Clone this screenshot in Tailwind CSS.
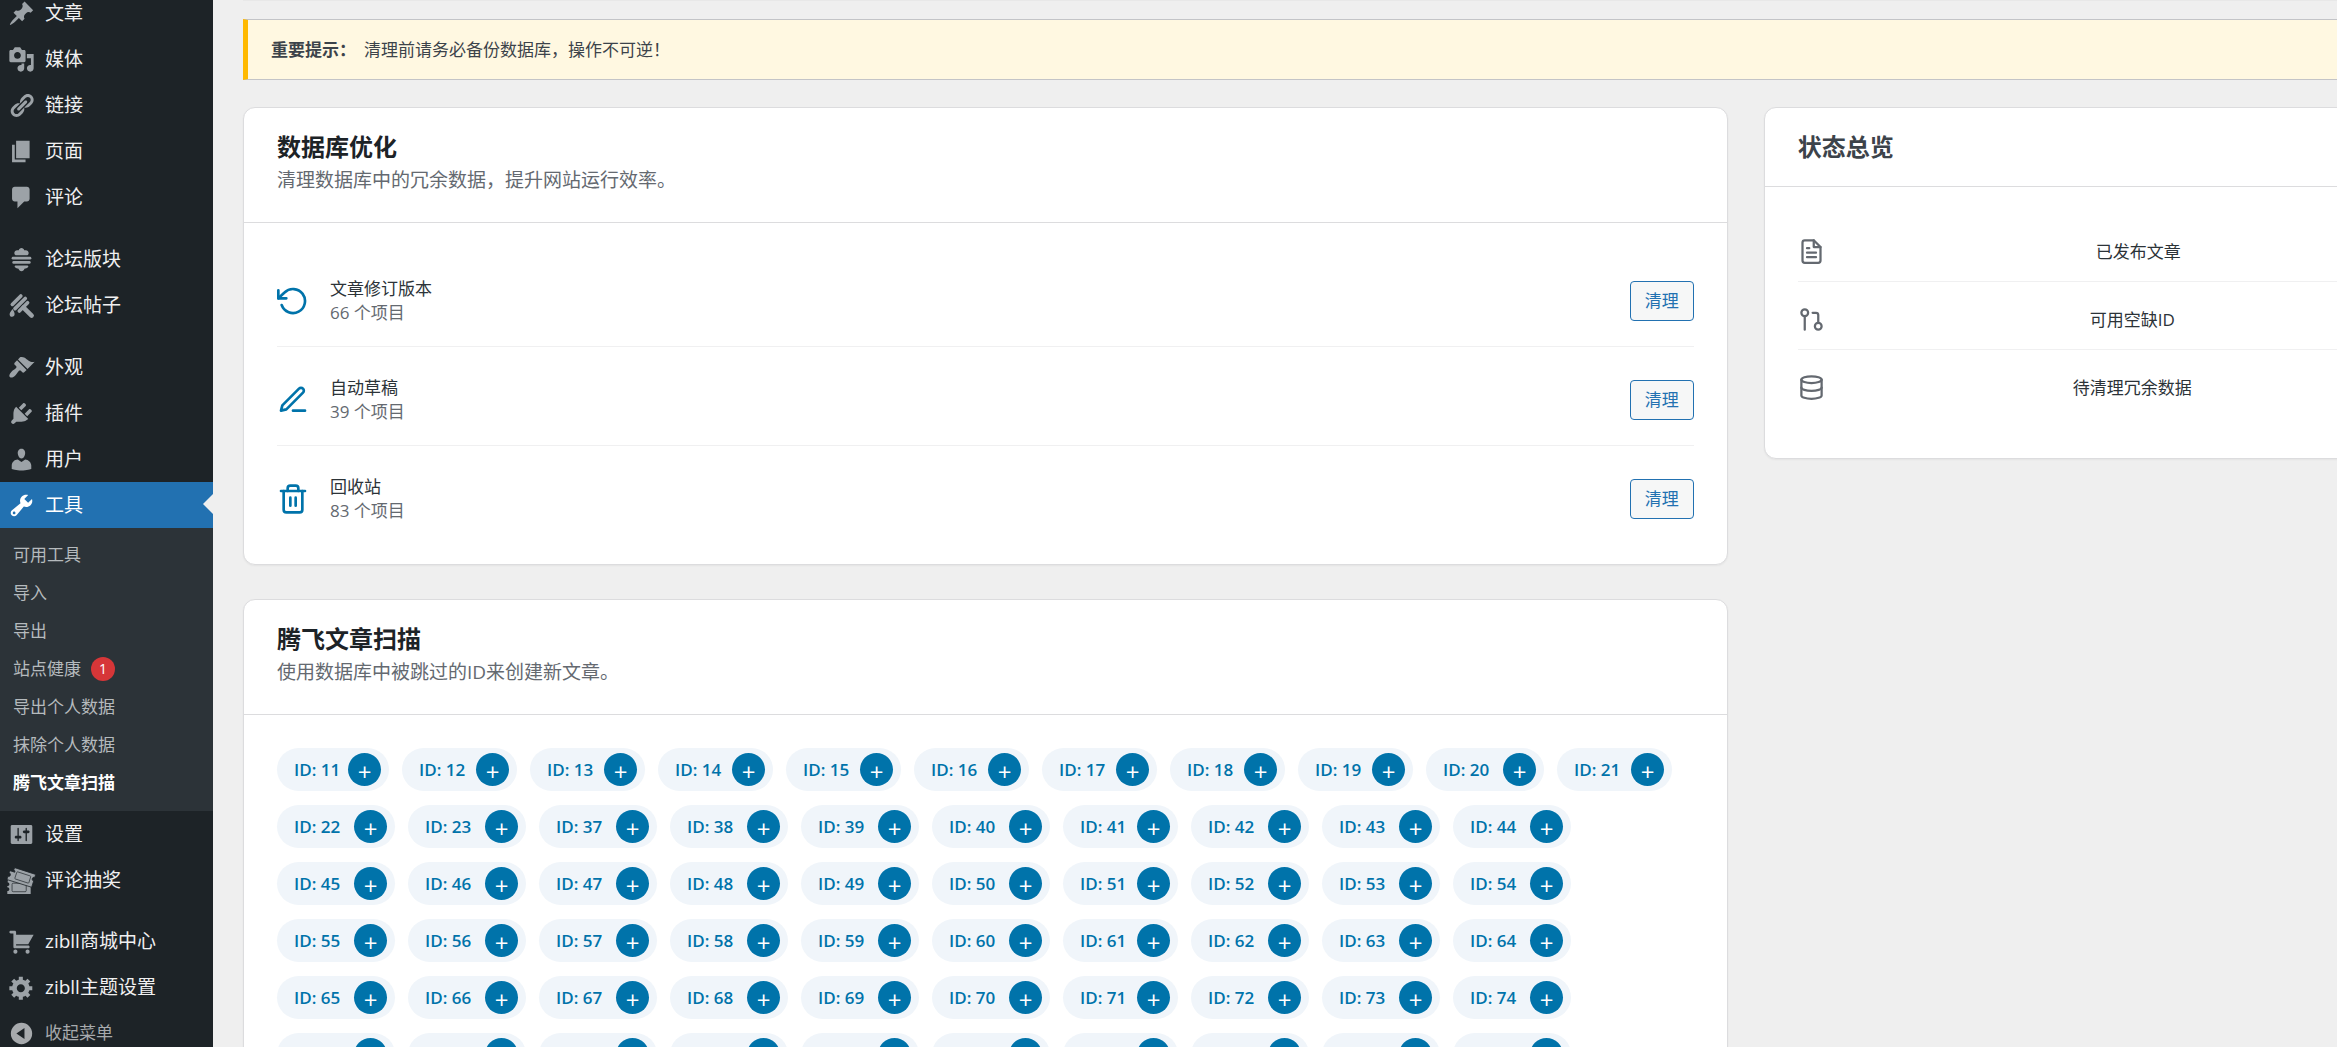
<!DOCTYPE html>
<html lang="zh-CN">
<head>
  <meta charset="UTF-8" />
  <meta name="viewport" content="width=device-width, initial-scale=1.0" />
  <title>腾飞文章扫描</title>
  <script src="https://cdn.jsdelivr.net/npm/@tailwindcss/browser@4"></script>
</head>
<body class="bg-[#efefef] font-['Open_Sans','Noto_Sans_CJK_SC',sans-serif] text-[17px] text-[#3c434a]">
  <div class="flex h-screen overflow-hidden">

    <!-- 后台菜单 -->
    <nav class="w-[213px] shrink-0 bg-[#1d2327] text-[19px] text-[#f0f0f1]">
      <ul class="-mt-2.5">
        <li><a href="#" class="flex h-[46px] items-center gap-2.5 pl-2"><svg class="size-[27px] fill-[#9ca2a7]" viewBox="0 0 20 20"><path d="M10.44 3.02l1.82-1.82 6.36 6.35-1.83 1.82c-1.05-.68-2.48-.57-3.41.36l-.75.75c-.92.93-1.04 2.35-.35 3.41l-1.83 1.82-2.41-2.41-2.8 2.79c-.42.42-3.38 2.71-3.8 2.29s1.86-3.39 2.28-3.81l2.79-2.79L4.1 9.36l1.83-1.82c1.05.69 2.48.57 3.4-.36l.75-.75c.93-.92 1.05-2.35.36-3.41z"/></svg>文章</a></li>
        <li><a href="#" class="flex h-[46px] items-center gap-2.5 pl-2"><svg class="size-[27px] fill-[#9ca2a7]" viewBox="0 0 20 20"><path d="M13 11V4c0-.55-.45-1-1-1h-1.67L9 1H5L3.67 3H2c-.55 0-1 .45-1 1v7c0 .55.45 1 1 1h10c.55 0 1-.45 1-1zM7 4.5c1.38 0 2.5 1.12 2.5 2.5S8.38 9.5 7 9.5 4.5 8.38 4.5 7 5.62 4.5 7 4.5zM14 6h5v10.5c0 1.38-1.12 2.5-2.5 2.5S14 17.88 14 16.5s1.12-2.5 2.5-2.5c.17 0 .34.02.5.05V9h-3V6zm-4 8.05V13h2v3.5c0 1.38-1.12 2.5-2.5 2.5S7 17.88 7 16.5 8.12 14 9.5 14c.17 0 .34.02.5.05z"/></svg>媒体</a></li>
        <li><a href="#" class="flex h-[46px] items-center gap-2.5 pl-2"><svg class="size-[27px] fill-[#9ca2a7]" viewBox="0 0 20 20"><path d="M17.74 2.76c1.68 1.69 1.68 4.41 0 6.1l-1.53 1.52c-1.12 1.12-2.7 1.47-4.14 1.09l2.62-2.61.76-.77.76-.76c.84-.84.84-2.2 0-3.04-.84-.85-2.2-.85-3.04 0l-.77.76-3.38 3.38c-.37-1.44-.02-3.02 1.1-4.14l1.52-1.53c1.69-1.68 4.42-1.68 6.1 0zM8.59 13.43l5.34-5.34c.42-.42.42-1.1 0-1.52-.44-.43-1.13-.39-1.53 0l-5.33 5.34c-.42.42-.42 1.1 0 1.52.44.43 1.13.39 1.52 0zm-.76 2.29l4.14-4.15c.38 1.44.03 3.02-1.09 4.14l-1.52 1.53c-1.69 1.68-4.41 1.68-6.1 0-1.68-1.68-1.68-4.42 0-6.1l1.53-1.52c1.12-1.12 2.7-1.47 4.14-1.1l-4.14 4.15c-.85.84-.85 2.2 0 3.05.84.84 2.2.84 3.04 0z"/></svg>链接</a></li>
        <li><a href="#" class="flex h-[46px] items-center gap-2.5 pl-2"><svg class="size-[27px] fill-[#9ca2a7]" viewBox="0 0 20 20"><path d="M6 15V2h10v13H6zm-1 1h8v2H3V5h2v11z"/></svg>页面</a></li>
        <li class="mb-4"><a href="#" class="flex h-[46px] items-center gap-2.5 pl-2"><svg class="size-[27px] fill-[#9ca2a7]" viewBox="0 0 20 20"><path d="M5 2h9c1.1 0 2 .9 2 2v7c0 1.1-.9 2-2 2h-2l-5 5v-5H5c-1.1 0-2-.9-2-2V4c0-1.1.9-2 2-2z"/></svg>评论</a></li>
        <li><a href="#" class="flex h-[46px] items-center gap-2.5 pl-2"><svg class="size-[27px] fill-[#9ca2a7]" viewBox="0 0 20 20"><path d="M8 3.2C8.2 2.2 9 1.5 10 1.5s1.8.7 2 1.7h1.200c1.2 0 2.1.9 2.1 2s-.6 1.700-1.400 1.700H6.100c-.8 0-1.400-.7-1.400-1.700s.9-2 2.100-2z"/><rect x="2.700" y="8" width="14.600" height="2" rx="1"/><rect x="3.200" y="11.200" width="13.600" height="2" rx="1"/><path d="M5.600 14.400h8.800c.7 0 .9.900.4 1.400-.6.600-1.600.900-2.600 1.100-.3 1-1.200 1.800-2.200 1.800s-1.900-.8-2.200-1.800c-1-.2-2-.5-2.600-1.100-.5-.5-.3-1.400.4-1.400z"/></svg>论坛版块</a></li>
        <li class="mb-4"><a href="#" class="flex h-[46px] items-center gap-2.5 pl-2"><svg class="size-[27px] fill-[#9ca2a7] stroke-[#9ca2a7]" viewBox="0 0 20 20"><path fill="none" stroke-linecap="round" stroke-width="2.700" d="M3.200 9.200l6.300-6.300M5.200 12.300l7.600-7.500M8.400 14.100l6.100-6.100"/><path fill="none" stroke-linecap="round" stroke-width="3.400" d="M11.500 11.500l6 6"/><path stroke="none" d="M3.300 12.500c1 1.600 1.600 2.600 1.600 3.800 0 1.200-.8 2.100-1.900 2.100s-1.800-.9-1.800-2c0-1.300 1.200-2.300 2.100-3.900z"/></svg>论坛帖子</a></li>
        <li><a href="#" class="flex h-[46px] items-center gap-2.5 pl-2"><svg class="size-[27px] fill-[#9ca2a7]" viewBox="0 0 20 20"><path d="M14.480 11.060L7.410 3.990l1.500-1.500c.5-.56 2.300-.47 3.510.32 1.210.8 1.430 1.280 2.910 2.100 1.180.64 2.450 1.260 4.450.85zm-.71.71L6.700 4.700 4.930 6.470c-.39.39-.39 1.020 0 1.410l1.060 1.060c.39.39.39 1.030 0 1.420-.6.6-1.430 1.110-2.210 1.690-.35.26-.7.53-1.010.84C1.430 14.230.4 16.080 1.400 17.070c.99 1 2.840-.03 4.180-1.360.31-.31.58-.66.85-1.020.57-.78 1.080-1.610 1.690-2.210.39-.39 1.020-.39 1.410 0l1.060 1.060c.39.39 1.020.39 1.410 0z"/></svg>外观</a></li>
        <li><a href="#" class="flex h-[46px] items-center gap-2.5 pl-2"><svg class="size-[27px] fill-[#9ca2a7]" viewBox="0 0 20 20"><path d="M13.110 4.360L9.870 7.600 8 5.730l3.240-3.240c.35-.34 1.050-.2 1.560.32.52.51.66 1.210.31 1.550zm-8 1.770l.91-1.120 9.010 9.010-1.190.84c-.71.71-2.630 1.160-3.820 1.160H6.140L4.900 17.260c-.59.59-1.540.59-2.120 0-.59-.58-.59-1.530 0-2.120l1.240-1.240v-3.880c0-1.130.4-3.190 1.090-3.890zm7.260 3.970l3.240-3.240c.34-.35 1.040-.21 1.550.31.52.51.66 1.210.31 1.550l-3.240 3.250z"/></svg>插件</a></li>
        <li><a href="#" class="flex h-[46px] items-center gap-2.5 pl-2"><svg class="size-[27px] fill-[#9ca2a7]" viewBox="0 0 20 20"><path d="M10 9.250c-2.270 0-2.730-3.440-2.730-3.440C7 4.020 7.820 2 9.970 2c2.160 0 2.980 2.020 2.710 3.810 0 0-.41 3.440-2.680 3.440zm0 2.570L12.720 10c2.390 0 4.520 2.330 4.520 4.530v2.490s-3.650 1.130-7.240 1.130c-3.650 0-7.240-1.130-7.240-1.130v-2.490c0-2.250 1.940-4.480 4.470-4.480z"/></svg>用户</a></li>
        <li>
          <a href="#" class="relative flex h-[46px] items-center gap-2.5 bg-[#2271b1] pl-2 text-white"><svg class="size-[27px] fill-white" viewBox="0 0 20 20"><path d="M16.680 9.770c-1.340 1.340-3.300 1.670-4.950.99l-5.410 6.520c-.99.99-2.590.99-3.580 0s-.99-2.590 0-3.570l6.520-5.420c-.68-1.650-.35-3.610.99-4.950 1.280-1.280 3.120-1.620 4.720-1.060l-2.890 2.890 2.820 2.820 2.860-2.870c.53 1.580.18 3.390-1.080 4.650zM3.810 16.210c.4.39 1.040.39 1.430 0 .4-.4.4-1.040 0-1.430-.39-.4-1.030-.4-1.430 0-.39.39-.39 1.030 0 1.430z"/></svg>工具<span class="absolute right-0 top-3 border-y-10 border-r-10 border-y-transparent border-r-[#efefef]"></span></a>
          <ul class="bg-[#2c3338] pt-2 pb-[9px] text-[17px] text-[#b5babd]">
            <li><a href="#" class="flex h-[38px] items-center pl-[13px]">可用工具</a></li>
            <li><a href="#" class="flex h-[38px] items-center pl-[13px]">导入</a></li>
            <li><a href="#" class="flex h-[38px] items-center pl-[13px]">导出</a></li>
            <li><a href="#" class="flex h-[38px] items-center gap-2.5 pl-[13px]">站点健康<span class="flex size-6 items-center justify-center rounded-full bg-[#d63638] text-sm text-white">1</span></a></li>
            <li><a href="#" class="flex h-[38px] items-center pl-[13px]">导出个人数据</a></li>
            <li><a href="#" class="flex h-[38px] items-center pl-[13px]">抹除个人数据</a></li>
            <li><a href="#" class="flex h-[38px] items-center pl-[13px] font-semibold text-white">腾飞文章扫描</a></li>
          </ul>
        </li>
        <li><a href="#" class="flex h-[46px] items-center gap-2.5 pl-2"><svg class="size-[27px] fill-[#9ca2a7]" viewBox="0 0 20 20"><path d="M18 16V4c0-.55-.45-1-1-1H3c-.55 0-1 .45-1 1v12c0 .55.45 1 1 1h14c.55 0 1-.45 1-1zM8 11h1c.55 0 1 .45 1 1s-.45 1-1 1H8v1.500c0 .28-.22.5-.5.5s-.5-.22-.5-.5V13H6c-.55 0-1-.45-1-1s.45-1 1-1h1V5.500c0-.28.22-.5.5-.5s.5.22.5.5V11zm5-2h-1c-.55 0-1-.45-1-1s.45-1 1-1h1V5.500c0-.28.22-.5.5-.5s.5.22.5.5V7h1c.55 0 1 .45 1 1s-.45 1-1 1h-1v5.500c0 .28-.22.5-.5.5s-.5-.22-.5-.5V9z"/></svg>设置</a></li>
        <li class="mb-[15px]"><a href="#" class="flex h-[46px] items-center gap-2.5 pl-2"><svg class="size-[27px] overflow-visible fill-[#9ca2a7] stroke-[#1d2327]" viewBox="0 0 20 20"><path stroke="none" d="M-.5 14c1 .2 1.500-.3 1.500-1.200S.5 11.500-.3 11.300l.3-2h16.800v2c-1 0-1.500.6-1.500 1.400s.6 1.300 1.500 1.300v6H-.5v-2.200c1 0 1.500-.6 1.500-1.400S.5 15-.5 15z"/><rect x="3" y="12" width="10.500" height="6.300" rx=".8" stroke-width=".5"/><path stroke-width=".6" d="M5 .5l15.500 5-.7 2.200c-.9-.2-1.600.1-1.800.9-.3.800.1 1.500 1 1.800l-1.500 4.600L-.8 9.300l.8-2.400c.9.200 1.500 0 1.700-.8.300-.9-.1-1.500-.9-1.800l.7-1.600L5 3.900c.3-.9 0-1.500-.8-1.700z"/><path stroke-width=".5" d="M7.200 3.600l9.200 3c.4.100.5.400.4.700l-1.300 4.200c-.1.400-.4.500-.7.400l-9.300-3c-.4-.1-.5-.4-.4-.7l1.400-4.200c.1-.4.4-.5.7-.4z"/></svg>评论抽奖</a></li>
        <li><a href="#" class="flex h-[46px] items-center gap-2.5 pl-2"><svg class="size-[27px] fill-[#9ca2a7]" viewBox="0 0 20 20"><path d="M6 13h9c.55 0 1 .45 1 1s-.45 1-1 1H5c-.55 0-1-.45-1-1V4H2c-.55 0-1-.45-1-1s.45-1 1-1h3c.55 0 1 .45 1 1v2h13l-4 7H6v1zm-.5 3c.83 0 1.500.67 1.500 1.500S6.330 19 5.500 19 4 18.330 4 17.500 4.670 16 5.500 16zm9 0c.83 0 1.500.67 1.500 1.500s-.67 1.500-1.500 1.500-1.500-.67-1.500-1.500.67-1.500 1.500-1.500z"/></svg>zibll商城中心</a></li>
        <li><a href="#" class="flex h-[46px] items-center gap-2.5 pl-2"><svg class="size-[27px] fill-[#9ca2a7]" viewBox="0 0 20 20"><path d="M18 12h-2.180c-.17.7-.44 1.350-.81 1.930l1.540 1.540-2.100 2.100-1.540-1.540c-.58.36-1.230.63-1.910.79V19H8v-2.180c-.68-.16-1.330-.43-1.910-.79l-1.540 1.540-2.120-2.120 1.540-1.540c-.36-.58-.63-1.230-.79-1.910H1V9.030h2.170c.16-.7.44-1.350.8-1.940L2.430 5.550l2.100-2.100 1.540 1.540c.58-.37 1.240-.64 1.930-.81V2h3v2.180c.68.16 1.330.43 1.910.79l1.540-1.540 2.120 2.120-1.540 1.540c.36.59.64 1.240.8 1.940H18V12zm-8.500 1.500c1.660 0 3-1.340 3-3s-1.340-3-3-3-3 1.340-3 3 1.340 3 3 3z"/></svg>zibll主题设置</a></li>
        <li><button type="button" class="flex h-[46px] items-center gap-2.5 pl-2 text-[17px] text-[#a7aaad]"><svg class="size-[27px] fill-[#a7aaad]" viewBox="0 0 20 20"><path fill-rule="evenodd" d="M10 2.100a7.900 7.900 0 1 1 0 15.800 7.900 7.900 0 0 1 0-15.800zM12.200 6v8L6.200 10z"/></svg>收起菜单</button></li>
      </ul>
    </nav>

    <main class="flex-1 overflow-hidden pl-[30px]">
      <!-- 内容区比窗口宽，右侧被裁切 -->
      <div class="w-[calc(100%+169px)] border-t border-[#e8e8e8]">
        <div class="mt-[18px] mb-[27px] border border-l-[5px] border-[#c3c4c7] border-l-[#ffb900] bg-[#fff8e1] py-4 pl-[23px] leading-[27px]">
          <strong class="mr-2 font-semibold">重要提示：</strong>清理前请务必备份数据库，操作不可逆！
        </div>

        <div class="grid grid-cols-[2fr_1fr] items-start gap-9">
          <div class="space-y-[34px]">
            <section class="rounded-xl border border-[#dcdcde] bg-white shadow-xs">
              <header class="border-b border-[#dcdcde] px-[33px] pt-6 pb-[26px]">
                <h2 class="text-[24px] leading-[30px] font-semibold text-[#1d2327]">数据库优化</h2>
                <p class="mt-0.5 text-[19px] leading-8 text-[#646970]">清理数据库中的冗余数据，提升网站运行效率。</p>
              </header>
              <ul class="px-[33px] pt-[25px] pb-5">
                <li class="flex items-center gap-[21px] border-b border-[#f0f0f1] pt-[29px] pb-[21px]">
                  <svg class="size-8 fill-none stroke-[#0073aa] stroke-2" stroke-linecap="round" stroke-linejoin="round" viewBox="0 0 24 24"><path d="M1 4v6h6"/><path d="M3.510 15a9 9 0 1 0 2.130-9.360L1 10"/></svg>
                  <div class="flex-1 leading-6">
                    <h3 class="text-[#2c3338]">文章修订版本</h3>
                    <p class="text-[#646970]">66 个项目</p>
                  </div>
                  <button type="button" class="h-10 w-16 rounded border border-[#2271b1] bg-[#f6f7f7] text-[#2271b1]">清理</button>
                </li>
                <li class="flex items-center gap-[21px] border-b border-[#f0f0f1] pt-[29px] pb-[21px]">
                  <svg class="size-8 fill-none stroke-[#0073aa] stroke-2" stroke-linecap="round" stroke-linejoin="round" viewBox="0 0 24 24"><path d="M12 20h9"/><path d="M16.500 3.500a2.121 2.121 0 0 1 3 3L7 19l-4 1 1-4L16.500 3.500z"/></svg>
                  <div class="flex-1 leading-6">
                    <h3 class="text-[#2c3338]">自动草稿</h3>
                    <p class="text-[#646970]">39 个项目</p>
                  </div>
                  <button type="button" class="h-10 w-16 rounded border border-[#2271b1] bg-[#f6f7f7] text-[#2271b1]">清理</button>
                </li>
                <li class="flex items-center gap-[21px] pt-[29px] pb-[21px]">
                  <svg class="size-8 fill-none stroke-[#0073aa] stroke-2" stroke-linecap="round" stroke-linejoin="round" viewBox="0 0 24 24"><path d="M3 6h18"/><path d="M19 6v14a2 2 0 0 1-2 2H7a2 2 0 0 1-2-2V6m3 0V4a2 2 0 0 1 2-2h4a2 2 0 0 1 2 2v2"/><path d="M10 11v6M14 11v6"/></svg>
                  <div class="flex-1 leading-6">
                    <h3 class="text-[#2c3338]">回收站</h3>
                    <p class="text-[#646970]">83 个项目</p>
                  </div>
                  <button type="button" class="h-10 w-16 rounded border border-[#2271b1] bg-[#f6f7f7] text-[#2271b1]">清理</button>
                </li>
              </ul>
            </section>

            <section class="rounded-xl border border-[#dcdcde] bg-white shadow-xs">
              <header class="border-b border-[#dcdcde] px-[33px] pt-6 pb-[26px]">
                <h2 class="text-[24px] leading-[30px] font-semibold text-[#1d2327]">腾飞文章扫描</h2>
                <p class="mt-0.5 text-[19px] leading-8 text-[#646970]">使用数据库中被跳过的ID来创建新文章。</p>
              </header>
              <div id="id-list" class="flex flex-wrap gap-x-[13px] gap-y-3.5 p-[33px]"></div>
            </section>
          </div>

          <section class="rounded-xl border border-[#dcdcde] bg-white shadow-xs">
            <header class="border-b border-[#dcdcde] px-[33px] py-6">
              <h2 class="text-[24px] leading-[30px] font-semibold">状态总览</h2>
            </header>
            <ul class="px-[33px] pt-[27px] pb-[41px] leading-[27px] text-[#2c3338]">
              <li class="flex items-center justify-between border-b border-[#f0f0f1] pt-6 pb-4">
                <svg class="size-[27px] fill-none stroke-[#646970] stroke-2" stroke-linecap="round" stroke-linejoin="round" viewBox="0 0 24 24"><path d="M14 2H6a2 2 0 0 0-2 2v16a2 2 0 0 0 2 2h12a2 2 0 0 0 2-2V8z"/><path d="M14 2v6h6M16 13H8M16 17H8M10 9H8"/></svg>
                <span>已发布文章</span>
                <span class="w-5"></span>
              </li>
              <li class="flex items-center justify-between border-b border-[#f0f0f1] pt-6 pb-4">
                <svg class="size-[27px] fill-none stroke-[#646970] stroke-2" stroke-linecap="round" stroke-linejoin="round" viewBox="0 0 24 24"><circle cx="18" cy="18" r="3"/><circle cx="6" cy="6" r="3"/><path d="M13 6h3a2 2 0 0 1 2 2v7M6 9v12"/></svg>
                <span>可用空缺ID</span>
                <span class="w-8"></span>
              </li>
              <li class="flex items-center justify-between pt-6 pb-4">
                <svg class="size-[27px] fill-none stroke-[#646970] stroke-2" stroke-linecap="round" stroke-linejoin="round" viewBox="0 0 24 24"><ellipse cx="12" cy="5" rx="9" ry="3"/><path d="M21 12c0 1.660-4 3-9 3s-9-1.340-9-3"/><path d="M3 5v14c0 1.660 4 3 9 3s9-1.340 9-3V5"/></svg>
                <span>待清理冗余数据</span>
                <span class="w-8"></span>
              </li>
            </ul>
          </section>
        </div>
      </div>
    </main>
  </div>

  <script>
    const ids = [];
    for (let i = 11; i <= 23; i++) ids.push(i);
    for (let i = 37; i <= 84; i++) ids.push(i);

    // 数字 1 较窄，按出现次数收窄标签
    const labelWidth = ['w-[51px]', 'w-12', 'w-[45px]'];

    document.getElementById('id-list').innerHTML = ids.map(id => {
      const ones = String(id).split('1').length - 1;
      return `
        <div class="flex h-[43px] items-center gap-[9px] rounded-full bg-[#f0f5fa] pr-2 pl-[17px] font-semibold text-[#0073aa]">
          <span class="${labelWidth[ones]} whitespace-nowrap">ID: ${id}</span>
          <button type="button" aria-label="创建 ${id}" class="size-[33px] rounded-full bg-[#0073aa] pt-1 text-[24px] leading-none font-normal text-white">+</button>
        </div>`;
    }).join('');
  </script>
</body>
</html>
